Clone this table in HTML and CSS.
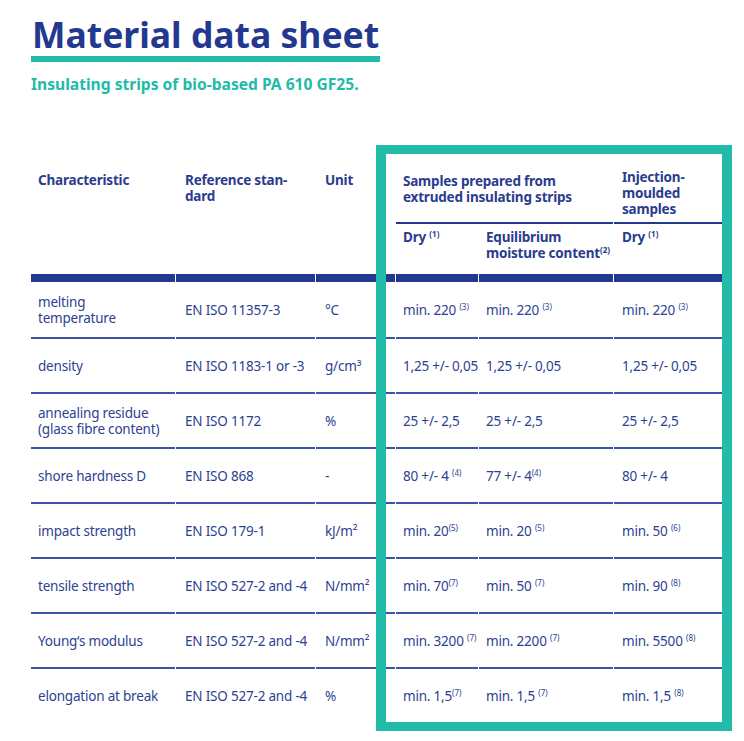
FILE: index.html
```html
<!DOCTYPE html>
<html lang="en">
<head>
<meta charset="utf-8">
<title>Material data sheet</title>
<link rel="stylesheet" href="styles.css">
</head>
<body>
<div class="page">
  <h1 class="title">Material data sheet</h1>
  <p class="subtitle">Insulating strips of bio-based PA 610 GF25.</p>

  <div class="table-wrap">
    <table class="sheet">
      <colgroup>
        <col class="w1"><col class="w2"><col class="w3"><col class="w4"><col class="w5"><col class="w6">
      </colgroup>
      <thead>
        <tr class="h1row">
          <th rowspan="2" class="p7">Characteristic</th>
          <th rowspan="2" class="p9">Reference stan-<br>dard</th>
          <th rowspan="2" class="p9">Unit</th>
          <th colspan="2" class="p7 sub">Samples prepared from<br>extruded insulating strips</th>
          <th class="p8 sub inj">Injection-<br>moulded<br>samples</th>
        </tr>
        <tr class="h2row">
          <th class="p7">Dry <sup>(1)</sup></th>
          <th class="p7">Equilibrium<br>moisture content<sup>(2)</sup></th>
          <th class="p8">Dry <sup>(1)</sup></th>
        </tr>
      </thead>
      <tbody>
        <tr>
          <td>melting<br>temperature</td><td>EN ISO 11357-3</td><td>°C</td>
          <td>min. 220 <sup>(3)</sup></td><td>min. 220 <sup>(3)</sup></td><td>min. 220 <sup>(3)</sup></td>
        </tr>
        <tr>
          <td>density</td><td>EN ISO 1183-1 or -3</td><td>g/cm³</td>
          <td>1,25 +/- 0,05</td><td>1,25 +/- 0,05</td><td>1,25 +/- 0,05</td>
        </tr>
        <tr>
          <td>annealing residue<br>(glass fibre content)</td><td>EN ISO 1172</td><td>%</td>
          <td>25 +/- 2,5</td><td>25 +/- 2,5</td><td>25 +/- 2,5</td>
        </tr>
        <tr>
          <td>shore hardness D</td><td>EN ISO 868</td><td>-</td>
          <td>80 +/- 4 <sup>(4)</sup></td><td>77 +/- 4<sup>(4)</sup></td><td>80 +/- 4</td>
        </tr>
        <tr>
          <td>impact strength</td><td>EN ISO 179-1</td><td>kJ/m²</td>
          <td>min. 20<sup>(5)</sup></td><td>min. 20 <sup>(5)</sup></td><td>min. 50 <sup>(6)</sup></td>
        </tr>
        <tr>
          <td>tensile strength</td><td>EN ISO 527-2 and -4</td><td>N/mm²</td>
          <td>min. 70<sup>(7)</sup></td><td>min. 50 <sup>(7)</sup></td><td>min. 90 <sup>(8)</sup></td>
        </tr>
        <tr>
          <td>Young‘s modulus</td><td>EN ISO 527-2 and -4</td><td>N/mm²</td>
          <td>min. 3200 <sup>(7)</sup></td><td>min. 2200 <sup>(7)</sup></td><td>min. 5500 <sup>(8)</sup></td>
        </tr>
        <tr>
          <td>elongation at break</td><td>EN ISO 527-2 and -4</td><td>%</td>
          <td>min. 1,5<sup>(7)</sup></td><td>min. 1,5 <sup>(7)</sup></td><td>min. 1,5 <sup>(8)</sup></td>
        </tr>
      </tbody>
    </table>
    <div class="highlight"></div>
  </div>
</div>
</body>
</html>
```
FILE: styles.css
```css
html, body {
  margin: 0;
  padding: 0;
  background: #ffffff;
}

body {
  min-height: 741px;
  font-family: "Noto Sans", "Open Sans", "Liberation Sans", sans-serif;
  color: #2a3c8e;
}

.page {
  padding: 15px 0 18px 31px;
}

.title {
  display: inline-block;
  margin: 0;
  padding: 0 1px 3px 1px;
  font-size: 35.5px;
  line-height: 38px;
  font-weight: 700;
  color: #22398f;
  border-bottom: 6px solid #22bba9;
}

.subtitle {
  margin: 14px 0 0 0;
  font-size: 15.6px;
  line-height: 17px;
  font-weight: 700;
  color: #22bba9;
}

.table-wrap {
  position: relative;
  margin-top: 70px;
  width: 701px;
}

.sheet {
  table-layout: fixed;
  border-collapse: separate;
  border-spacing: 1px 0;
  width: 697px;
  margin-left: -1px;
  font-size: 13.5px;
  line-height: 16px;
  letter-spacing: -0.2px;
}

.w1 { width: 144px; }
.w2 { width: 139px; }
.w3 { width: 79px; }
.w4 { width: 82px; }
.w5 { width: 134px; }
.w6 { width: 112px; }

.sheet th {
  text-align: left;
  vertical-align: top;
  font-weight: 700;
  color: #2a3c8e;
  padding: 0;
  white-space: nowrap;
}

.sheet .p7 { padding-left: 7px; }
.sheet .p8 { padding-left: 8px; }
.sheet .p9 { padding-left: 9px; }

.h1row th {
  padding-top: 9px;
}

.h1row th.sub {
  padding-top: 10px;
  height: 49px;
  border-bottom: 2px solid #22398f;
}

.h1row th.inj {
  padding-top: 6px;
  height: 53px;
}

.h2row th {
  padding-top: 5px;
  height: 45px;
}

.h1row th[rowspan],
.h2row th {
  border-bottom: 8px solid #22398f;
}

.sheet sup {
  font-size: 8px;
  line-height: 0;
  letter-spacing: 0;
  vertical-align: 5px;
}

.sheet td {
  height: 53px;
  padding: 0 0 0 7px;
  vertical-align: middle;
  white-space: nowrap;
  color: #2d3f92;
  border-top: 2px solid #3d54a6;
}

.sheet tbody tr:first-child td {
  height: 55px;
  border-top: 0;
}

.sheet td:nth-child(2),
.sheet td:nth-child(3) {
  padding-left: 9px;
}

.sheet td:nth-child(6) {
  padding-left: 8px;
}

.highlight {
  position: absolute;
  left: 345px;
  top: -18px;
  width: 336px;
  height: 568px;
  border-style: solid;
  border-color: #22bba9;
  border-width: 9px 10px;
  pointer-events: none;
}
```
